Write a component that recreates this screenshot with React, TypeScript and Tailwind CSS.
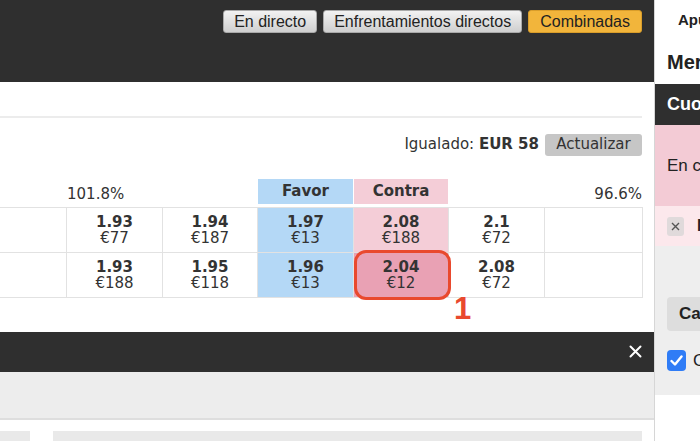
import React from 'react'

type Cell = { odd: string; stake: string; kind?: 'back' | 'lay' | 'picked' }

const rows: Cell[][] = [
  [
    { odd: '1.93', stake: '€77' },
    { odd: '1.94', stake: '€187' },
    { odd: '1.97', stake: '€13', kind: 'back' },
    { odd: '2.08', stake: '€188', kind: 'lay' },
    { odd: '2.1', stake: '€72' },
  ],
  [
    { odd: '1.93', stake: '€188' },
    { odd: '1.95', stake: '€118' },
    { odd: '1.96', stake: '€13', kind: 'back' },
    { odd: '2.04', stake: '€12', kind: 'picked' },
    { odd: '2.08', stake: '€72' },
  ],
]

const cellBg = {
  back: 'bg-[#b4d8f6]',
  lay: 'bg-[#f4cdd7]',
  picked: 'bg-[#e9a1b4]',
}

function TopButton({ label, yellow }: { label: string; yellow?: boolean }) {
  return (
    <button
      className={
        'h-[23px] rounded-[3px] border text-[16px] leading-none text-[#222] ' +
        (yellow
          ? 'bg-[#f2b53b] border-[#d99d2a] px-[11px]'
          : 'bg-gradient-to-b from-[#f2f2f2] to-[#cfcfcf] border-[#a9a9a9] px-[10px]')
      }
    >
      {label}
    </button>
  )
}

function OddsCell({ c }: { c: Cell }) {
  return (
    <div className={'flex flex-col items-center justify-center h-[44px] ' + (c.kind ? cellBg[c.kind] : 'bg-white')}>
      <span className="font-bold text-[15px] leading-[16px] text-[#333]">{c.odd}</span>
      <span className="text-[15px] leading-[16px] text-[#333]">{c.stake}</span>
    </div>
  )
}

export default function App() {
  return (
    <div className="flex w-[700px] h-[441px] overflow-hidden bg-white" style={{ fontFamily: '"DejaVu Sans", Verdana, sans-serif' }}>
      {/* main column */}
      <div className="relative w-[655px] shrink-0 border-r border-[#d6d6d6] flex flex-col">
        <div className="h-[83px] bg-[#2f2f2f] flex justify-end items-start gap-[6px] pt-[10px] pr-[12px] font-['Liberation_Sans',Arial,sans-serif]">
          <TopButton label="En directo" />
          <TopButton label="Enfrentamientos directos" />
          <TopButton label="Combinadas" yellow />
        </div>

        <div className="h-[34px]" />
        <div className="h-[2px] mr-[12px] bg-[#ececec]" />

        <div className="flex justify-end items-center gap-[6px] pr-[12px] mt-[16px] h-[22px]">
          <span className="text-[15px] text-[#333]">
            Igualado: <b>EUR 58</b>
          </span>
          <button className="w-[97px] h-[22px] rounded-[3px] bg-[#c6c6c6] text-[15px] text-[#333] leading-none">
            Actualizar
          </button>
        </div>

        {/* header row */}
        <div className="grid grid-cols-[66px_95px_94px_95px_94px_95px_97px] gap-x-px mt-[23px] h-[26px] w-[642px] text-[15px] text-[#333]">
          <div />
          <div className="flex items-end leading-[18px] pb-[1px]">101.8%</div>
          <div />
          <div className="bg-[#b4d8f6] flex items-center justify-center font-bold">Favor</div>
          <div className="bg-[#f4cdd7] flex items-center justify-center font-bold">Contra</div>
          <div />
          <div className="flex items-end justify-end leading-[18px] pb-[1px]">96.6%</div>
        </div>

        {/* odds table */}
        <div className="mt-[3px] w-[643px] grid grid-cols-[66px_95px_94px_95px_94px_95px_97px] gap-px bg-[#e2e2e2] border-y border-r border-[#e2e2e2]">
          {rows.map((r, i) => (
            <React.Fragment key={i}>
              <div className="bg-white h-[44px]" />
              {r.map((c, j) => (
                <OddsCell key={j} c={c} />
              ))}
              <div className="bg-white h-[44px]" />
            </React.Fragment>
          ))}
        </div>

        <div className="h-[34px]" />
        <div className="h-[40px] bg-[#2f2f2f] flex items-center justify-end pr-[12px]">
          <svg width="13" height="13" viewBox="0 0 13 13">
            <path d="M1.5 1.5 L11.5 11.5 M11.5 1.5 L1.5 11.5" stroke="#fff" strokeWidth="2" strokeLinecap="round" />
          </svg>
        </div>
        <div className="h-[49px] bg-[#ededed] border-b-2 border-[#dedede]" />
        <div className="flex gap-[23px] mt-[11px] pr-[12px]">
          <div className="w-[30px] h-[10px] bg-[#e9e9e9]" />
          <div className="flex-1 h-[10px] bg-[#e9e9e9]" />
        </div>

        {/* annotation overlay */}
        <div className="absolute left-[354px] top-[250px] w-[97px] h-[50px] rounded-[12px] border-[3px] border-[#e9492e]" />
        <div className="absolute left-[454px] top-[292px] text-[#e9492e] font-bold text-[31px] leading-[34px] font-['Liberation_Sans',Arial,sans-serif]">
          1
        </div>
      </div>

      {/* right panel */}
      <div className="flex-1 min-w-0 flex flex-col font-['Liberation_Sans',Arial,sans-serif] text-[#222] whitespace-nowrap overflow-hidden">
        <div className="h-[40px] pl-[23px] flex items-center font-bold text-[15px]">Apuestas</div>
        <div className="h-[44px] pl-[12px] flex items-center font-bold text-[20px]">Mercados</div>
        <div className="h-[41px] bg-[#2f2f2f] text-white pl-[12px] flex items-center font-bold text-[18px]">Cuotas</div>
        <div className="h-[81px] bg-[#f3cbd5] pl-[12px] flex items-center text-[17px]">En contra</div>
        <div className="h-[40px] bg-[#fce8ec] pl-[12px] flex items-center gap-[13px]">
          <span className="shrink-0 w-[17px] h-[19px] rounded-[3px] bg-[#e0dadb] flex items-center justify-center">
            <svg width="9" height="9" viewBox="0 0 9 9">
              <path d="M1 1 L8 8 M8 1 L1 8" stroke="#555" strokeWidth="1.4" />
            </svg>
          </span>
          <span className="font-bold text-[16px]">Nombre</span>
        </div>
        <div className="h-[149px] bg-[#eeeeee] pl-[12px] flex flex-col">
          <div className="mt-[51px] h-[34px] rounded-l-[4px] bg-[#dddddd] pl-[12px] flex items-center font-bold text-[17px]">Cancelar</div>
          <div className="mt-[17px] flex items-center gap-[7px]">
            <span className="shrink-0 w-[19px] h-[21px] rounded-[4px] bg-[#2f7cf6] flex items-center justify-center">
              <svg width="13" height="11" viewBox="0 0 13 11">
                <path d="M1.5 6 L5 9.5 L11.5 1.5" stroke="#fff" strokeWidth="2.4" fill="none" strokeLinecap="round" strokeLinejoin="round" />
              </svg>
            </span>
            <span className="text-[17px]">Confirmar</span>
          </div>
        </div>
      </div>
    </div>
  )
}
